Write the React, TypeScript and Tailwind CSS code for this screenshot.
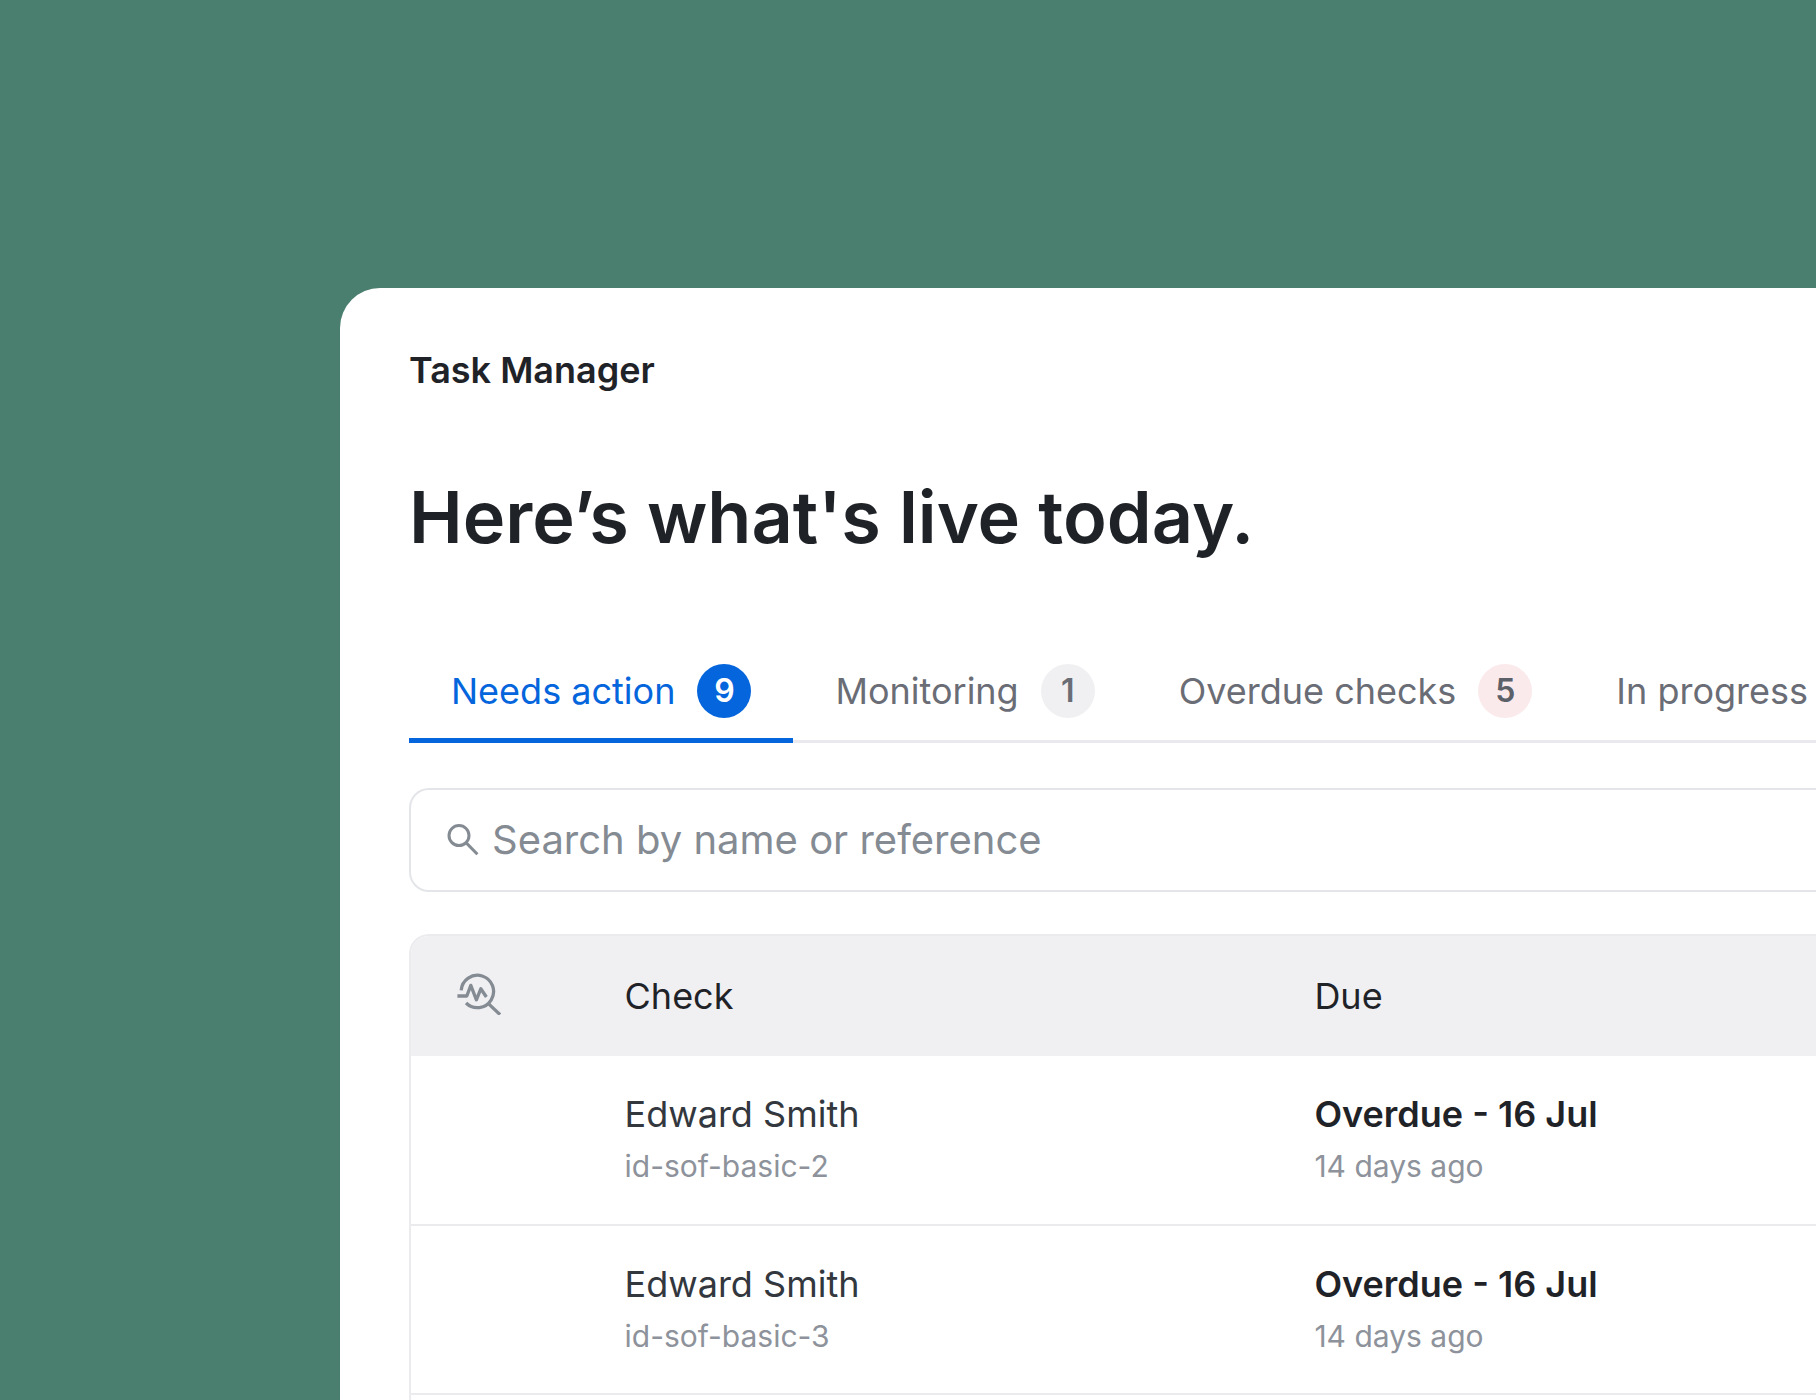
import { useState } from 'react'
import { clsx } from 'clsx'

type TabId = 'needs-action' | 'monitoring' | 'overdue' | 'in-progress'

const TABS: { id: TabId; label: string; count?: number; badge?: string }[] = [
  { id: 'needs-action', label: 'Needs action', count: 9, badge: 'bg-[#0465dc] text-white' },
  { id: 'monitoring', label: 'Monitoring', count: 1, badge: 'bg-[#f0f0f3] text-[#6a6d75]' },
  { id: 'overdue', label: 'Overdue checks', count: 5, badge: 'bg-[#fbeaec] text-[#5c6068]' },
  { id: 'in-progress', label: 'In progress' },
]

const CHECKS = [
  { name: 'Edward Smith', ref: 'id-sof-basic-2', due: 'Overdue - 16 Jul', ago: '14 days ago' },
  { name: 'Edward Smith', ref: 'id-sof-basic-3', due: 'Overdue - 16 Jul', ago: '14 days ago' },
]

function SearchIcon() {
  return (
    <svg viewBox="0 0 32 32" className="size-8 shrink-0" fill="none" stroke="#858b93" strokeWidth="3" aria-hidden="true">
      <circle cx="12" cy="11.6" r="10" />
      <path d="M19 18.6 30.4 30.2" />
    </svg>
  )
}

function MonitorIcon() {
  return (
    <svg viewBox="0 0 44 42" className="mb-1 h-[42px] w-11" fill="none" stroke="#858b93" strokeWidth="3.3" strokeLinejoin="round" role="img" aria-label="Monitored">
      <path d="M4.2 17.4A16.2 16.2 0 1 1 9 30" />
      <path d="M31.4 30.6 43 41.6" />
      <path d="M.4 23H9.8L13.8 12.4 19.4 26.8 23.8 15.8 29.4 24" />
    </svg>
  )
}

function Tabs({ active, onChange }: { active: TabId; onChange: (t: TabId) => void }) {
  return (
    <nav className="flex overflow-hidden shadow-[inset_0_-3px_0_#e9e9ee]">
      {TABS.map(({ id, label, count, badge }) => (
        <button
          key={id}
          type="button"
          onClick={() => onChange(id)}
          className={clsx(
            'flex h-24 shrink-0 items-center gap-[22px] border-b-5 px-[42px] pb-1 text-[36px] whitespace-nowrap',
            active === id ? 'border-[#0465dc] text-[#0465dc]' : 'border-transparent text-[#6a6d75]',
          )}
        >
          {label}
          {count !== undefined && (
            <span className={clsx('flex size-[54px] items-center justify-center rounded-full text-[32px] font-semibold', badge)}>
              {count}
            </span>
          )}
        </button>
      ))}
    </nav>
  )
}

export default function App() {
  const [tab, setTab] = useState<TabId>('needs-action')
  const [query, setQuery] = useState('')
  const rows = CHECKS.filter((c) => `${c.name} ${c.ref}`.toLowerCase().includes(query.toLowerCase()))

  return (
    <div className="flex h-screen overflow-hidden bg-[#4a7f6f] pt-72 pl-[340px] font-['Inter',sans-serif] text-[#1f2328]">
      <main className="flex min-w-0 flex-1 flex-col rounded-tl-[40px] bg-white pt-[58px] pl-[69px]">
        <p className="text-[36px] leading-12 font-semibold">Task Manager</p>
        <h1 className="mt-[78px] text-[72px] leading-[90px] font-semibold">Here’s what's live today.</h1>

        <div className="mt-[85px]">
          <Tabs active={tab} onChange={setTab} />
        </div>

        <label className="mt-[45px] flex h-[104px] shrink-0 items-center gap-[13px] rounded-l-[20px] border-2 border-r-0 border-[#e4e5e9] pl-9">
          <SearchIcon />
          <input
            type="text"
            value={query}
            onChange={(e) => setQuery(e.target.value)}
            placeholder="Search by name or reference"
            aria-label="Search by name or reference"
            className="min-w-0 flex-1 text-[40px] outline-none placeholder:text-[#858b93]"
          />
        </label>

        <div className="mt-[42px] flex-1 overflow-hidden rounded-tl-[20px] border-t-2 border-l-2 border-[#ebebee]">
          <table className="w-full table-fixed text-left">
            <colgroup>
              <col className="w-[15.2%]" />
              <col className="w-[49.1%]" />
              <col />
            </colgroup>
            <thead className="bg-[#f0f0f3] text-[36px]">
              <tr className="h-[120px]">
                <th className="pl-[46px]">
                  <MonitorIcon />
                </th>
                <th className="font-normal">Check</th>
                <th className="font-normal">Due</th>
              </tr>
            </thead>
            <tbody>
              {rows.map((c) => (
                <tr key={c.ref} className="h-[169px] border-b-2 border-[#ebebee]">
                  <td />
                  <td>
                    <div className="text-[36px] leading-12 text-[#33373e]">{c.name}</div>
                    <div className="mt-1 text-[30px] leading-12 text-[#8d929b]">{c.ref}</div>
                  </td>
                  <td>
                    <div className="text-[36px] leading-12 font-semibold">{c.due}</div>
                    <div className="mt-1 text-[30px] leading-12 text-[#8d929b]">{c.ago}</div>
                  </td>
                </tr>
              ))}
            </tbody>
          </table>
        </div>
      </main>
    </div>
  )
}
